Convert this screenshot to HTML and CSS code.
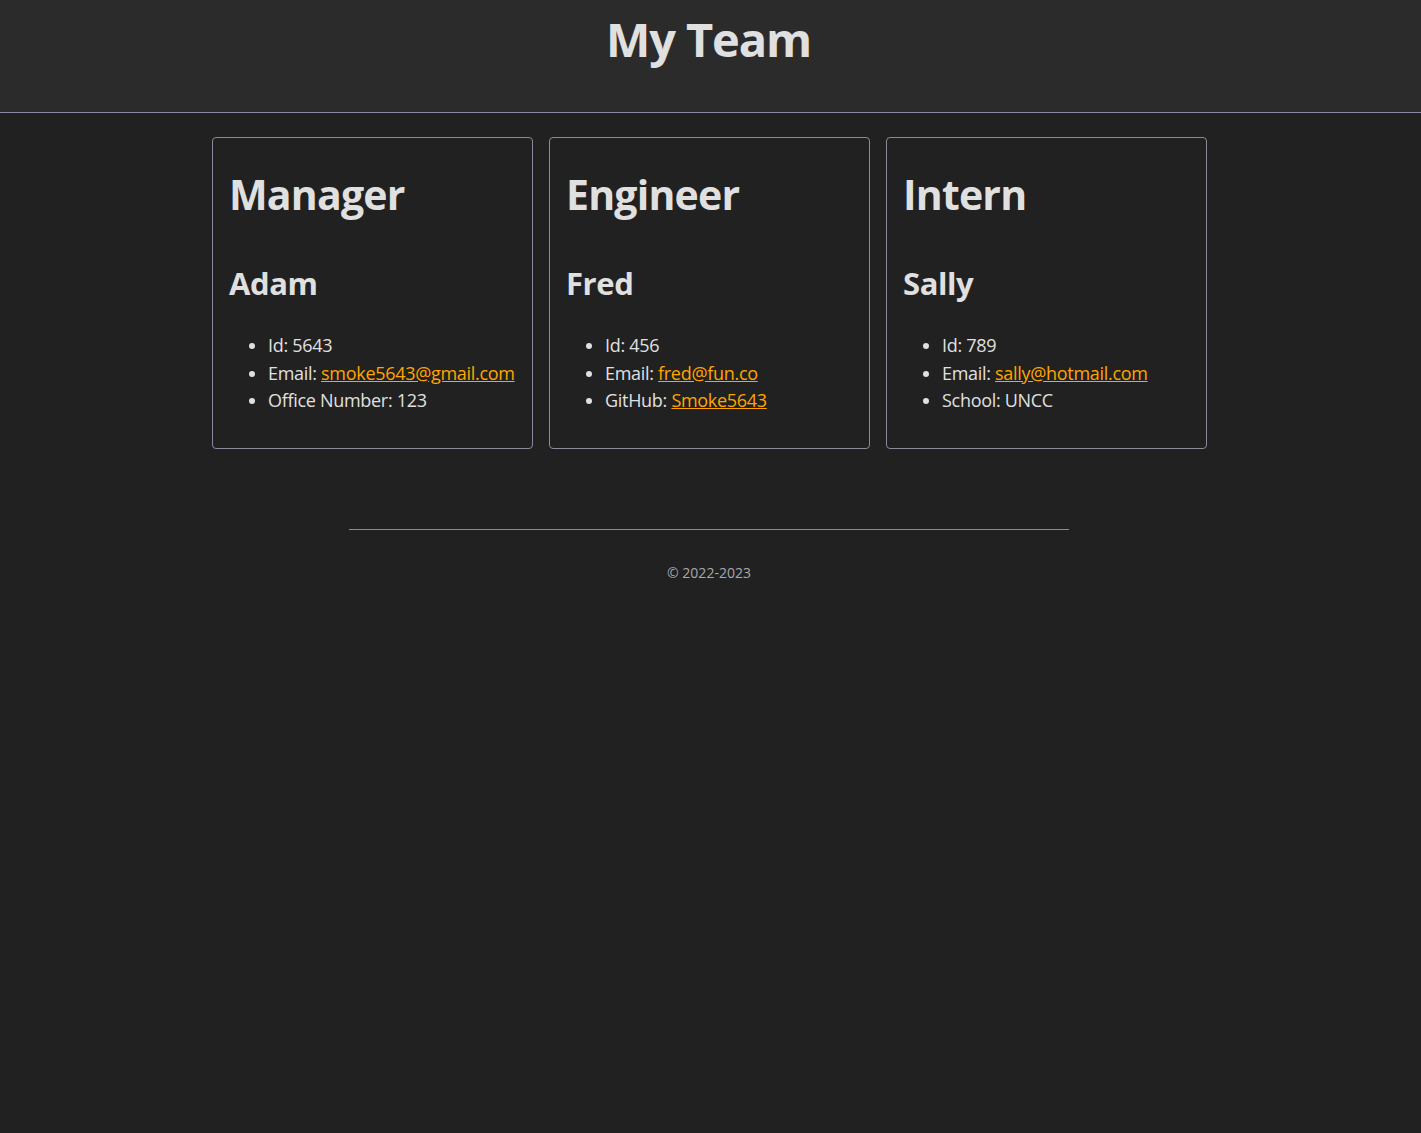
FILE: index.html
```html
<!DOCTYPE html>
<html lang="en">
<head>
<meta charset="UTF-8">
<title>My Team</title>
<link rel="stylesheet" href="styles.css">
</head>
<body>
<header class="site-header">
  <h1 class="site-title">My Team</h1>
</header>
<main class="team">
  <section class="card">
    <h2 class="role">Manager</h2>
    <h3 class="name">Adam</h3>
    <ul class="info">
      <li>Id: 5643</li>
      <li>Email: <a href="#">smoke5643@gmail.com</a></li>
      <li>Office Number: 123</li>
    </ul>
  </section>
  <section class="card">
    <h2 class="role">Engineer</h2>
    <h3 class="name">Fred</h3>
    <ul class="info">
      <li>Id: 456</li>
      <li>Email: <a href="#">fred@fun.co</a></li>
      <li>GitHub: <a href="#">Smoke5643</a></li>
    </ul>
  </section>
  <section class="card">
    <h2 class="role">Intern</h2>
    <h3 class="name">Sally</h3>
    <ul class="info">
      <li>Id: 789</li>
      <li>Email: <a href="#">sally@hotmail.com</a></li>
      <li>School: UNCC</li>
    </ul>
  </section>
</main>
<footer class="site-footer">
  <hr class="footer-rule">
  <p class="copyright">© 2022-2023</p>
</footer>
</body>
</html>
```
FILE: styles.css
```css
html, body {
  margin: 0;
  padding: 0;
  background: #212121;
  color: #e0e0e0;
  font-family: "Open Sans", "Noto Sans", sans-serif;
}

.site-header {
  background: #2b2b2b;
  height: 112px;
  border-bottom: 1px solid #8a8aa8;
  display: flex;
  justify-content: center;
  padding-right: 4px;
}

.site-title {
  margin: 0;
  padding-top: 11px;
  font-size: 47px;
  line-height: 56px;
  font-weight: 700;
  letter-spacing: -1.1px;
  color: #e0e0e0;
}

.team {
  display: flex;
  justify-content: center;
  gap: 16px;
  margin-top: 24px;
  padding-right: 2px;
}

.card {
  box-sizing: border-box;
  width: 321px;
  height: 312px;
  border: 1px solid #8a8a9c;
  border-radius: 4px;
  padding: 30px 15px 0 16px;
}

.role {
  margin: 0;
  font-size: 41px;
  line-height: 52px;
  font-weight: 700;
  letter-spacing: -0.8px;
}

.name {
  margin: 44px 0 0;
  font-size: 31px;
  line-height: 38px;
  font-weight: 700;
  letter-spacing: -0.4px;
}

.info {
  margin: 30px 0 0;
  padding-left: 39px;
  font-size: 18px;
  line-height: 27.5px;
  letter-spacing: -0.3px;
}

.info a {
  color: #ffa500;
}

.site-footer {
  margin-top: 80px;
  padding-right: 3px;
  display: flex;
  flex-direction: column;
  align-items: center;
}

.footer-rule {
  width: 720px;
  margin: 0;
  border: 0;
  border-top: 1px solid #8a8a9c;
}

.copyright {
  margin: 33px 0 0;
  font-size: 14px;
  color: #a8a8b0;
}
```
